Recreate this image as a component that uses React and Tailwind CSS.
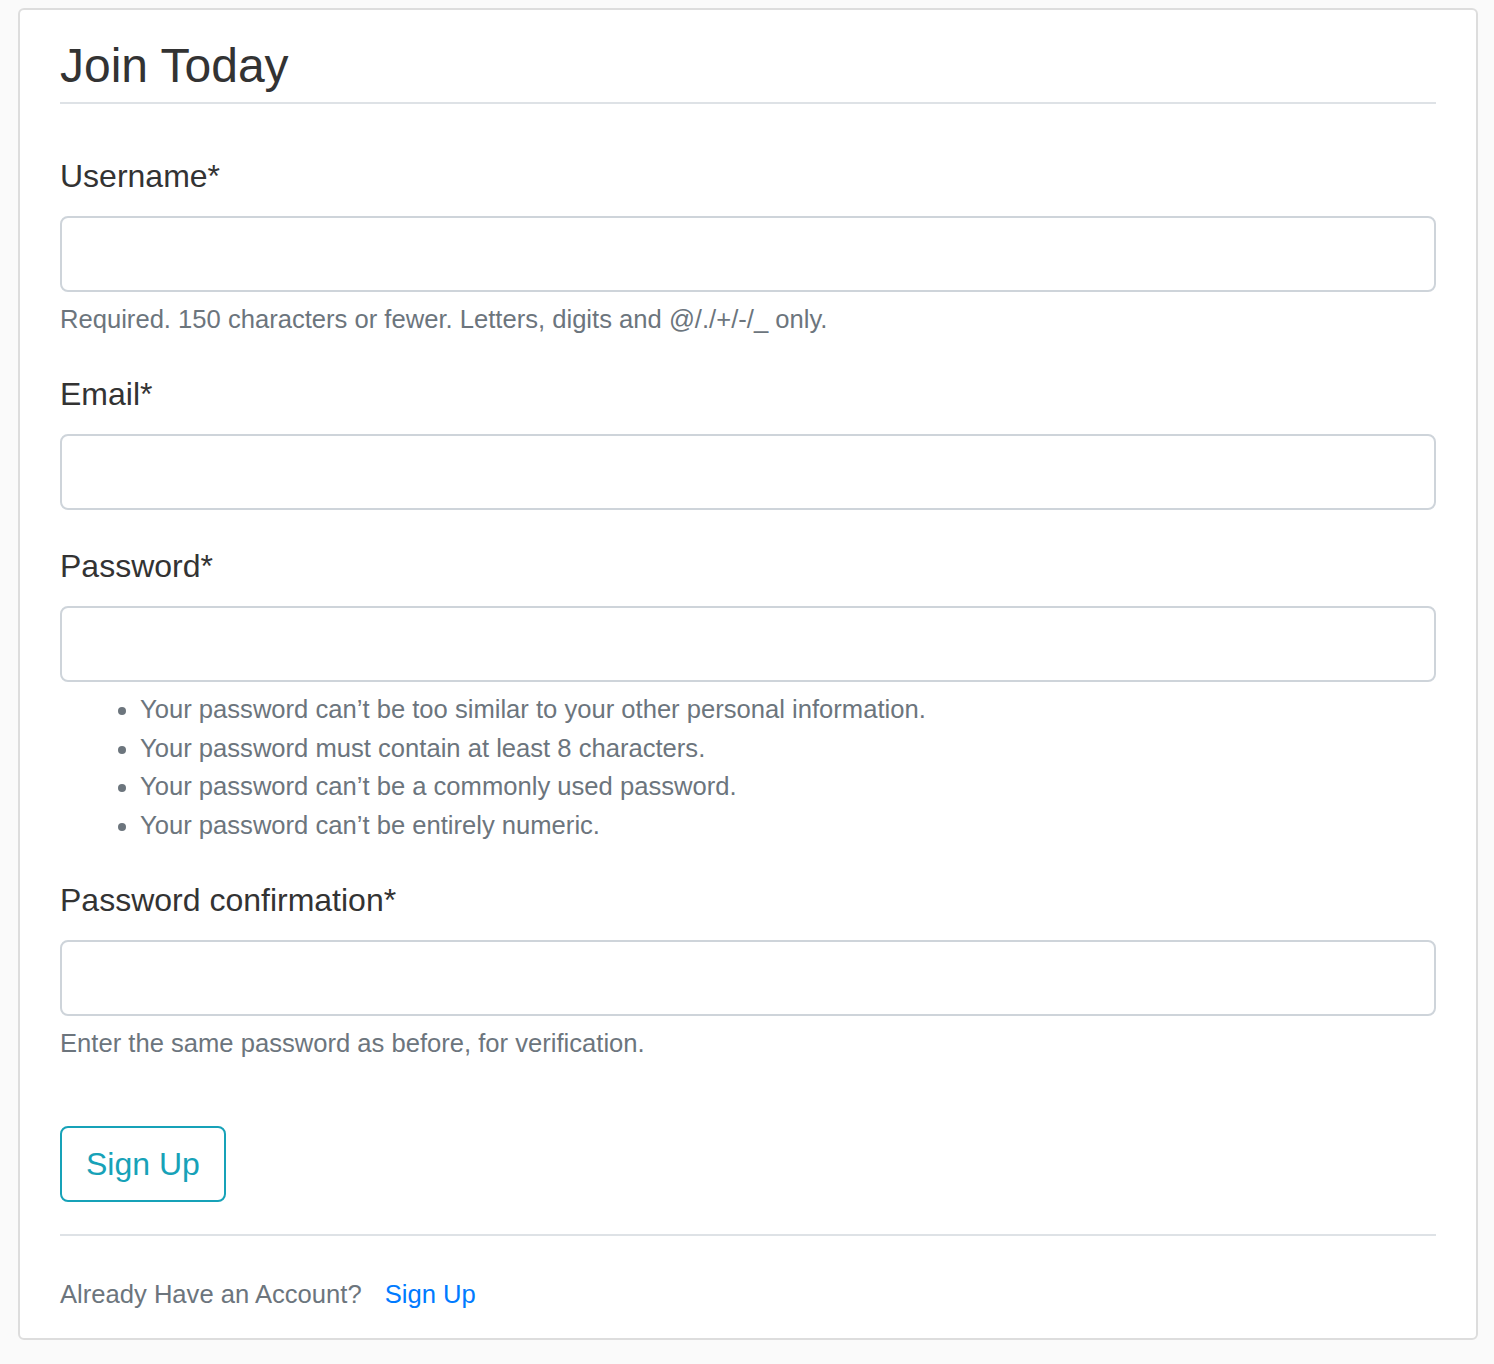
export default function App() {
  const Label = ({ children }) => (
    <label className="block text-[32px] leading-[48px] mb-[16px] text-[#333333]">{children}</label>
  );
  const Input = ({ type = "text" }) => (
    <input
      type={type}
      className="block w-full h-[76px] bg-white border-2 border-[#ced4da] rounded-[8px] px-[24px] text-[32px] outline-none"
    />
  );
  return (
    <div className="min-h-[1364px] bg-[#fafafa] pl-[18px] pt-[8px] font-['Liberation_Sans',Arial,sans-serif] text-[#333333]">
      <div className="w-[1460px] bg-white border-2 border-[#dddddd] rounded-[6px] px-[40px] pt-[20px] pb-[20px]">
        <form onSubmit={(e) => e.preventDefault()}>
          <div className="mb-[64px]">
            <div className="text-[48px] leading-[72px] border-b-2 border-[#dee2e6] mb-[48px] text-[#333333]">
              Join Today
            </div>
            <div className="mb-[32px]">
              <Label>Username*</Label>
              <Input />
              <div className="mt-[8px] text-[25.6px] leading-[38.4px] text-[#6c757d]">
                Required. 150 characters or fewer. Letters, digits and @/./+/-/_ only.
              </div>
            </div>
            <div className="mb-[32px]">
              <Label>Email*</Label>
              <Input type="email" />
            </div>
            <div className="mb-[32px]">
              <Label>Password*</Label>
              <Input type="password" />
              <ul className="mt-[8px] list-disc pl-[80px] text-[25.6px] leading-[38.4px] text-[#6c757d]">
                <li>Your password can’t be too similar to your other personal information.</li>
                <li>Your password must contain at least 8 characters.</li>
                <li>Your password can’t be a commonly used password.</li>
                <li>Your password can’t be entirely numeric.</li>
              </ul>
            </div>
            <div>
              <Label>Password confirmation*</Label>
              <Input type="password" />
              <div className="mt-[8px] text-[25.6px] leading-[38.4px] text-[#6c757d]">
                Enter the same password as before, for verification.
              </div>
            </div>
          </div>
          <div className="mb-[32px]">
            <button
              type="submit"
              className="border-2 border-[#17a2b8] text-[#17a2b8] bg-white rounded-[8px] px-[24px] py-[12px] text-[32px] leading-[48px]"
            >
              Sign Up
            </button>
          </div>
        </form>
        <div className="border-t-2 border-[#dee2e6] pt-[32px] text-[32px] leading-[48px]">
          <small className="text-[25.6px] text-[#6c757d]">
            Already Have an Account?
            <a href="#" className="ml-[16px] text-[#007bff]"> Sign Up</a>
          </small>
        </div>
      </div>
    </div>
  );
}
